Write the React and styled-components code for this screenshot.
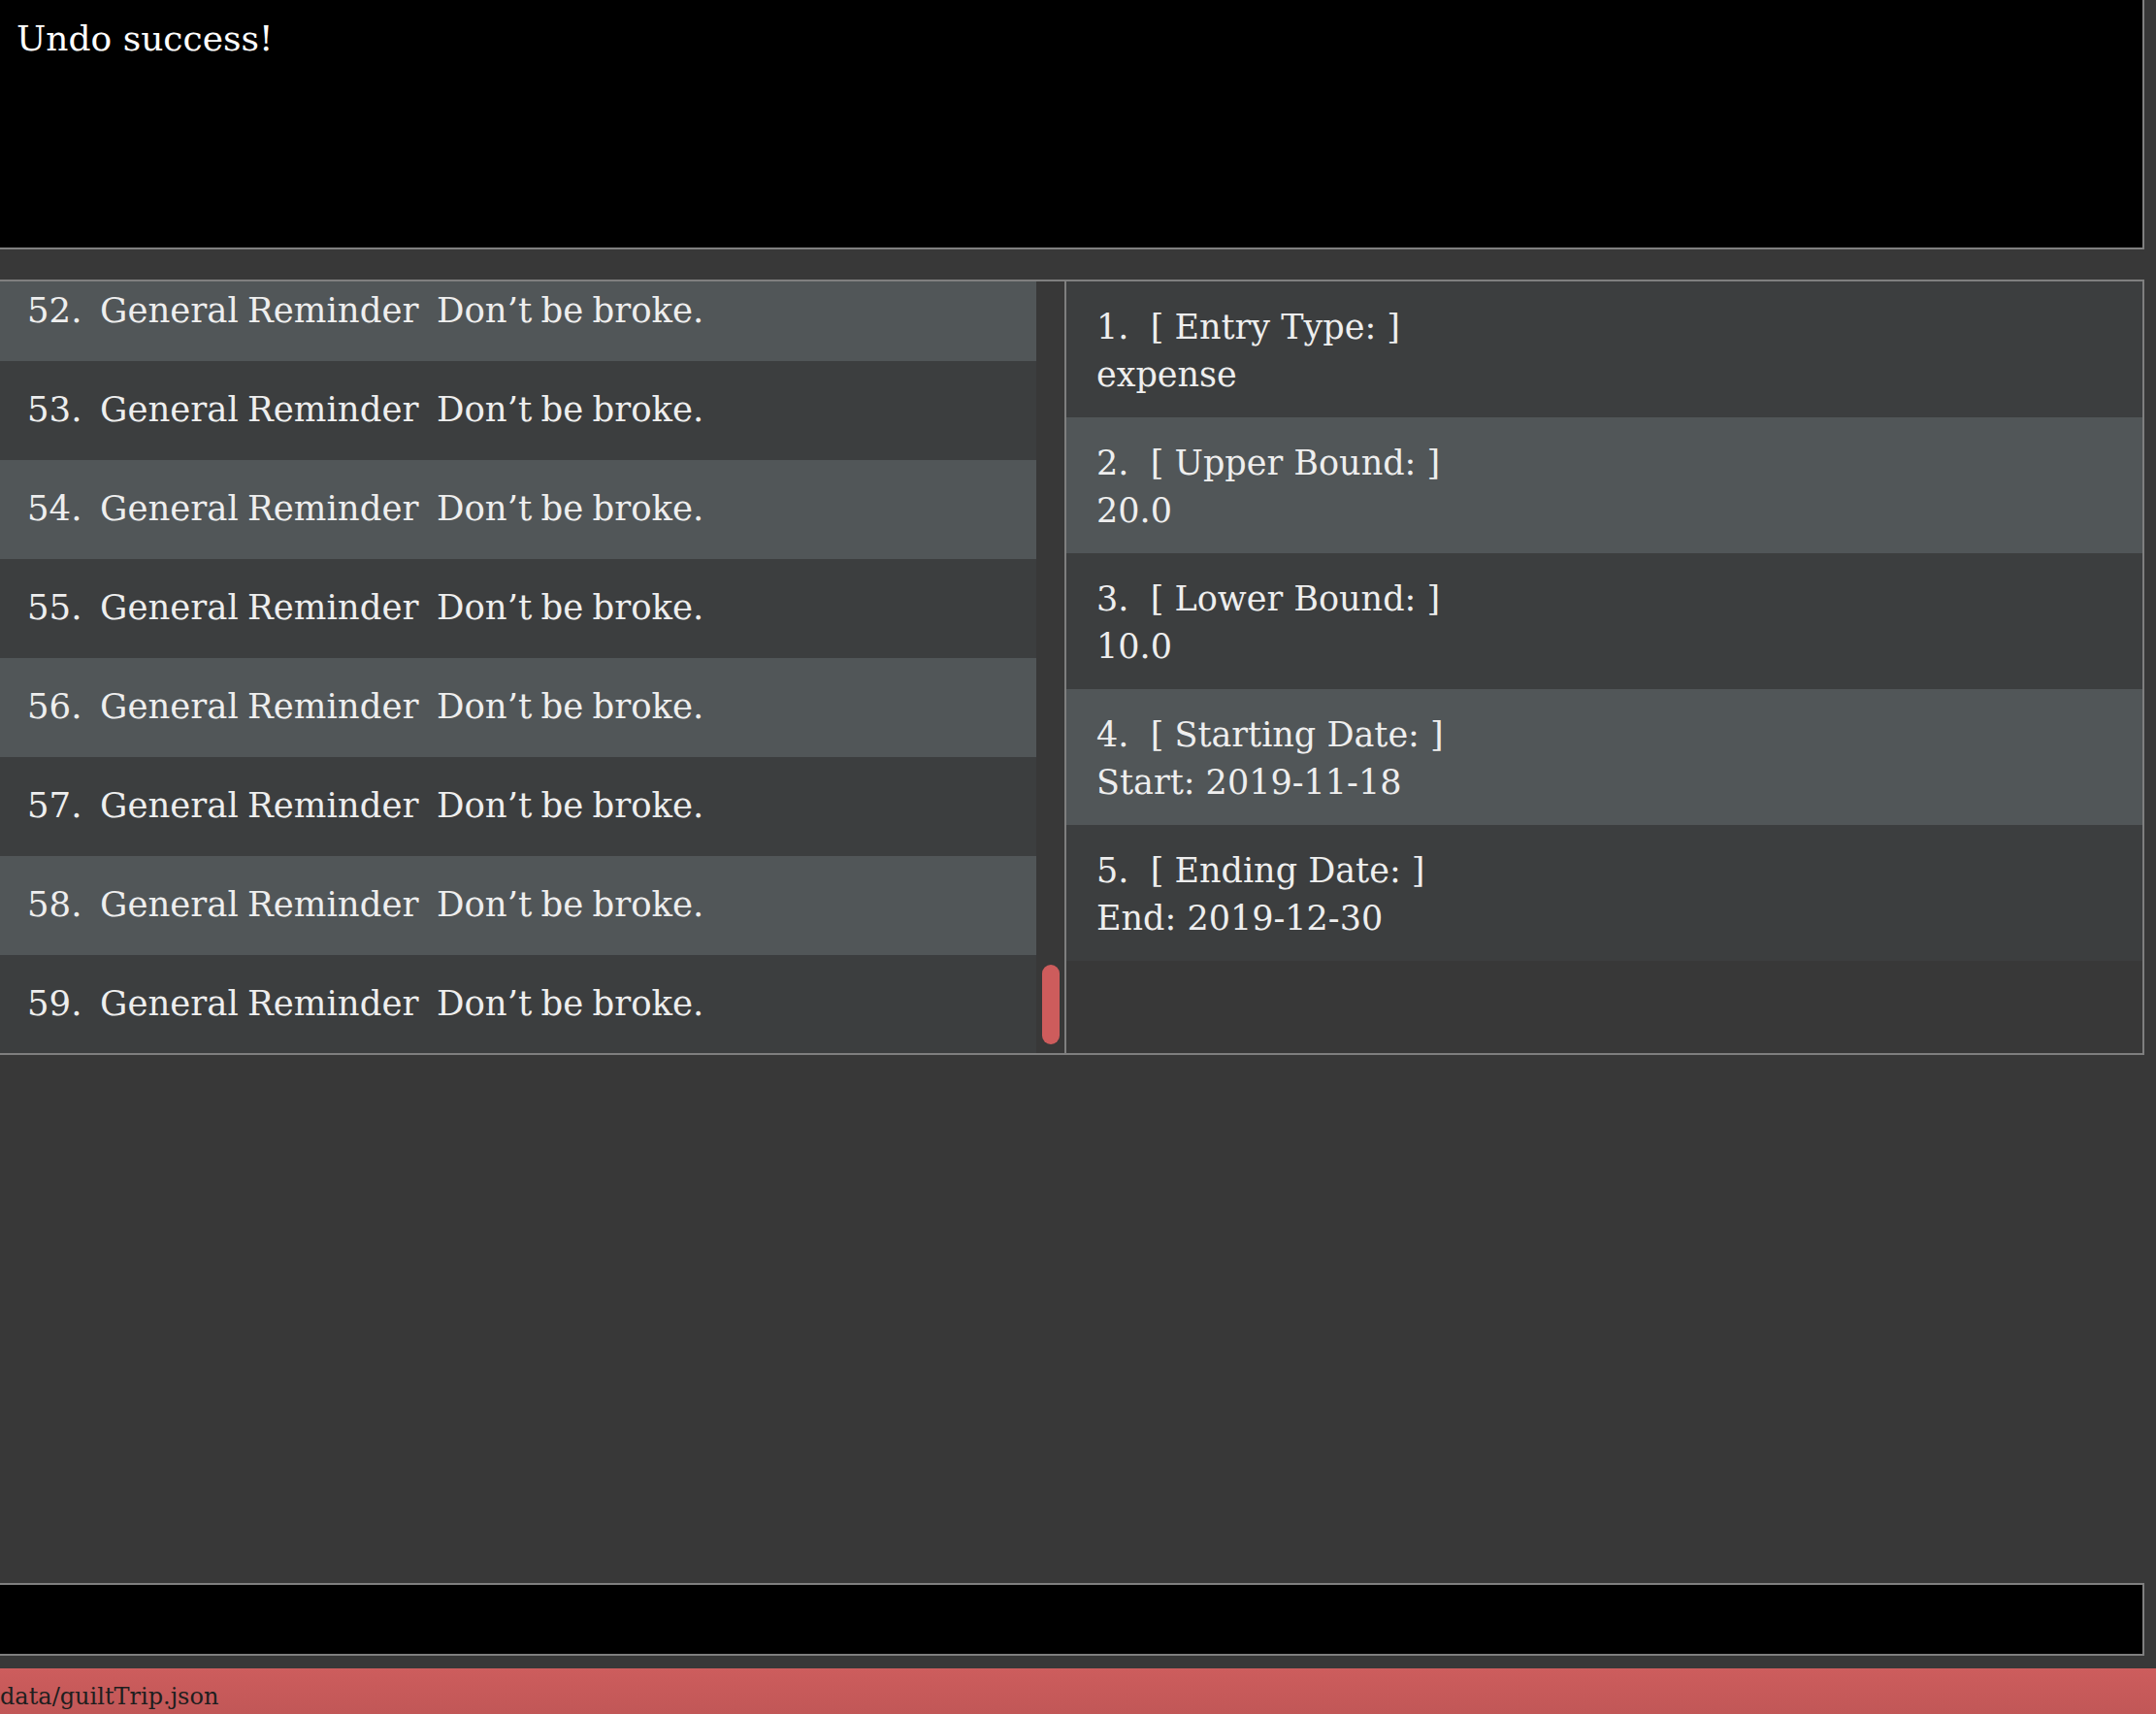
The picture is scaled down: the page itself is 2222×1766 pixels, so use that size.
import React from 'react';
import styled, { createGlobalStyle } from 'styled-components';

const GlobalStyle = createGlobalStyle`
  html, body {
    margin: 0;
    padding: 0;
    background: #383838;
    overflow: hidden;
  }
`;

const Window = styled.div`
  display: flex;
  flex-direction: column;
  width: 2222px;
  height: 1766px;
  background: #383838;
  color: #eeeeee;
  font-family: 'DejaVu Serif', 'Liberation Serif', serif;
`;

const ResultDisplay = styled.div`
  height: 257px;
  margin-right: 12px;
  padding: 19px 17px;
  box-sizing: border-box;
  background: #000;
  color: #fff;
  border-right: 2px solid #7f7f7f;
  border-bottom: 2px solid #7f7f7f;
  font-size: 36px;
`;

const MainPanel = styled.div`
  display: flex;
  height: 799px;
  margin-top: 31px;
  margin-right: 12px;
  box-sizing: border-box;
  border-top: 2px solid #7f7f7f;
  border-bottom: 2px solid #7f7f7f;
  border-right: 2px solid #7f7f7f;
  overflow: hidden;
`;

const ListPane = styled.div`
  width: 1068px;
  overflow: hidden;
`;

const ListInner = styled.div`
  margin-top: -20px;
`;

const Cell = styled.div`
  display: flex;
  align-items: center;
  background: ${p => (p.$odd ? '#3c3e3f' : '#515658')};
`;

const ListCell = styled(Cell)`
  height: 102px;
  padding: 0 0 4px 28px;
  box-sizing: border-box;
  font-size: 35.5px;
  word-spacing: -2px;
  white-space: pre;
`;

const ScrollTrack = styled.div`
  display: flex;
  flex-direction: column;
  justify-content: flex-end;
  width: 31px;
  padding: 0 5px 9px 6px;
  box-sizing: border-box;
  background: #383838;
  border-right: 2px solid #7f7f7f;
`;

const ScrollThumb = styled.div`
  height: 82px;
  border-radius: 9px;
  background: #cd5c5c;
`;

const DetailPane = styled.div`
  flex: 1;
  display: flex;
  flex-direction: column;
`;

const DetailCell = styled(Cell)`
  flex-direction: column;
  align-items: flex-start;
  justify-content: center;
  height: 140px;
  padding: 3px 0 0 31px;
  box-sizing: border-box;
  font-size: 35px;
  line-height: 49px;
  white-space: pre;
`;

const Filler = styled.div`
  flex: 1;
`;

const CommandBox = styled.div`
  height: 75px;
  margin-right: 12px;
  box-sizing: border-box;
  background: #000;
  border-top: 2px solid #7f7f7f;
  border-bottom: 2px solid #7f7f7f;
  border-right: 2px solid #7f7f7f;
`;

const StatusBar = styled.div`
  display: flex;
  align-items: flex-end;
  height: 47px;
  margin-top: 13px;
  padding-bottom: 4px;
  box-sizing: border-box;
  background: linear-gradient(#cd5d5d, #c15757);
  color: #1e1e1e;
  font-size: 24px;
`;

const reminders = [52, 53, 54, 55, 56, 57, 58, 59];

const details = [
  ['1.  [ Entry Type: ]', 'expense'],
  ['2.  [ Upper Bound: ]', '20.0'],
  ['3.  [ Lower Bound: ]', '10.0'],
  ['4.  [ Starting Date: ]', 'Start: 2019-11-18'],
  ['5.  [ Ending Date: ]', 'End: 2019-12-30'],
];

export default function App() {
  return (
    <Window>
      <GlobalStyle />
      <ResultDisplay>Undo success!</ResultDisplay>
      <MainPanel>
        <ListPane>
          <ListInner>
            {reminders.map((n, i) => (
              <ListCell key={n} $odd={i % 2 === 1}>
                {`${n}.  General Reminder  Don’t be broke.`}
              </ListCell>
            ))}
          </ListInner>
        </ListPane>
        <ScrollTrack>
          <ScrollThumb />
        </ScrollTrack>
        <DetailPane>
          {details.map(([label, value], i) => (
            <DetailCell key={label} $odd={i % 2 === 0}>
              <div>{label}</div>
              <div>{value}</div>
            </DetailCell>
          ))}
        </DetailPane>
      </MainPanel>
      <Filler />
      <CommandBox />
      <StatusBar>data/guiltTrip.json</StatusBar>
    </Window>
  );
}
